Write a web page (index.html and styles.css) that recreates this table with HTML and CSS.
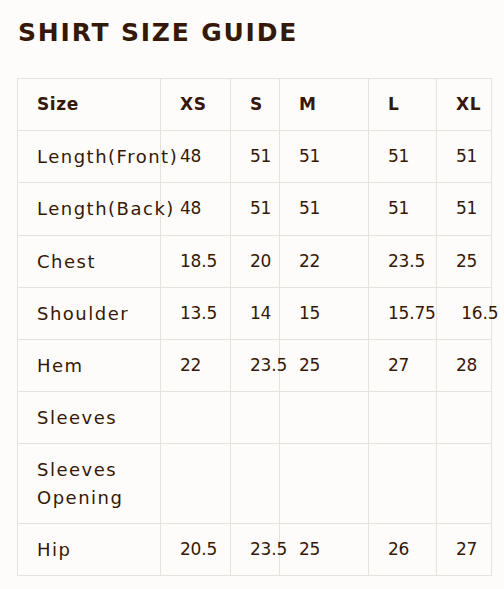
FILE: index.html
```html
<!DOCTYPE html>
<html lang="en">
<head>
<meta charset="utf-8">
<title>Shirt Size Guide</title>
<link rel="stylesheet" href="styles.css">
</head>
<body>
<main class="page">
  <h1 class="title">SHIRT SIZE GUIDE</h1>
  <table class="size-table">
    <colgroup>
      <col class="c1"><col class="c2"><col class="c3"><col class="c4"><col class="c5"><col class="c6">
    </colgroup>
    <thead>
      <tr><th>Size</th><th>XS</th><th>S</th><th>M</th><th>L</th><th>XL</th></tr>
    </thead>
    <tbody>
      <tr><td>Length(Front)</td><td>48</td><td>51</td><td>51</td><td>51</td><td>51</td></tr>
      <tr><td>Length(Back)</td><td>48</td><td>51</td><td>51</td><td>51</td><td>51</td></tr>
      <tr><td>Chest</td><td>18.5</td><td>20</td><td>22</td><td>23.5</td><td>25</td></tr>
      <tr><td>Shoulder</td><td>13.5</td><td>14</td><td>15</td><td>15.75</td><td>&nbsp;16.5</td></tr>
      <tr><td>Hem</td><td>22</td><td>23.5</td><td>25</td><td>27</td><td>28</td></tr>
      <tr><td>Sleeves</td><td></td><td></td><td></td><td></td><td></td></tr>
      <tr><td>Sleeves Opening</td><td></td><td></td><td></td><td></td><td></td></tr>
      <tr><td>Hip</td><td>20.5</td><td>23.5</td><td>25</td><td>26</td><td>27</td></tr>
    </tbody>
  </table>
</main>
</body>
</html>
```

FILE: styles.css
```css
html, body {
  margin: 0;
  padding: 0;
  background: #fdfcfa;
}
.page {
  padding: 17px 0 0 17px;
  font-family: "DejaVu Sans", "Noto Sans", sans-serif;
  color: #351806;
}
.title {
  margin: 0 0 29px 1px;
  font-size: 25px;
  line-height: 32px;
  font-weight: 600;
  letter-spacing: 1.8px;
}
.size-table {
  border-collapse: collapse;
  table-layout: fixed;
  width: 474px;
  font-size: 18px;
  letter-spacing: 1.5px;
}
.c1 { width: 143px; }
.c2 { width: 70px; }
.c3 { width: 49px; }
.c4 { width: 89px; }
.c5 { width: 68px; }
.c6 { width: 55px; }
.size-table th,
.size-table td {
  border: 1px solid #e6e3dc;
  padding: 12px 0 12px 19px;
  line-height: 27.2px;
  text-align: left;
  vertical-align: middle;
  overflow: visible;
}
.size-table td + td {
  font-size: 17px;
  letter-spacing: -0.2px;
}
.size-table th {
  font-size: 17px;
  font-weight: 700;
  letter-spacing: 0.6px;
}
```
